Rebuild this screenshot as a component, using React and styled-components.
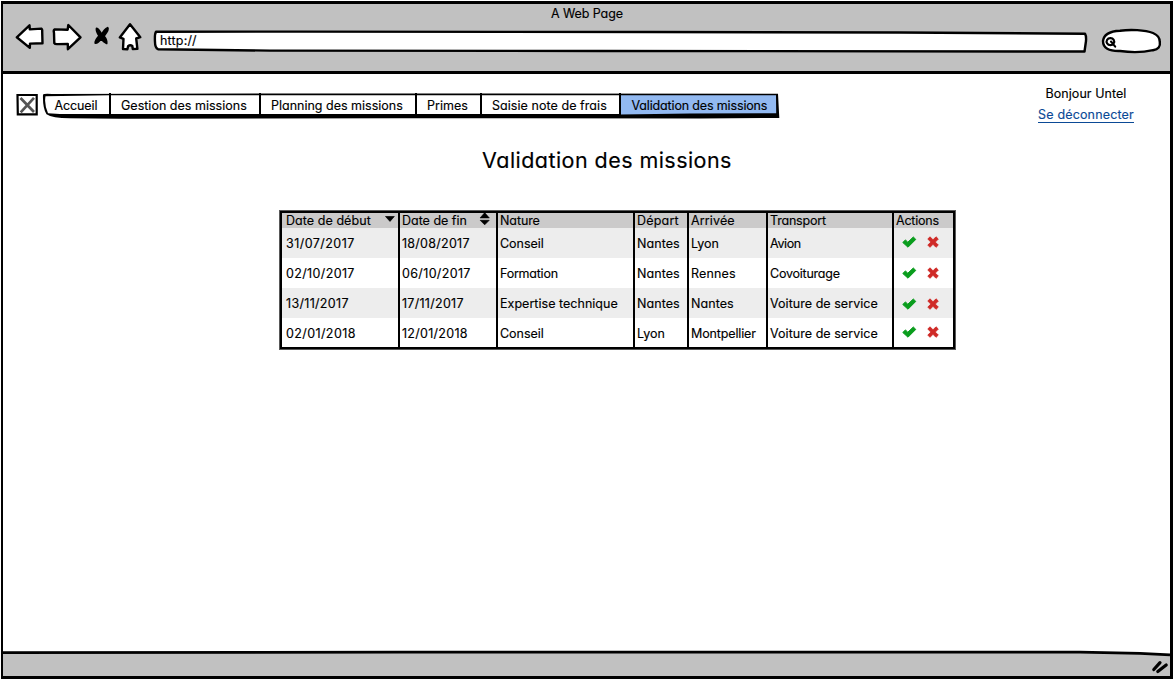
import React, { useLayoutEffect, useRef, useState } from "react";
import styled, { createGlobalStyle } from "styled-components";

const Global = createGlobalStyle`
  * { box-sizing: border-box; }
  body { margin: 0; background: #fff; }
  body, button { font-family: Inter, "Liberation Sans", sans-serif; font-size: 13px; color: #000; }
`;

const Window = styled.div`
  position: relative;
  display: flex;
  flex-direction: column;
  width: 1172px;
  height: 678px;
  margin: 1px;
  border: 3px solid #000;
  border-left-width: 2px;
  background: #fff;
`;

const Label = styled.span`
  display: inline-block;
  white-space: nowrap;
  line-height: 16px;
  font-size: ${(p) => p.$size || 12.5}px;
  font-feature-settings: "cv11" 1, "calt" 0;
  color: ${(p) => p.$color || "#000"};
  -webkit-text-stroke: 0.15px currentColor;
`;

/* Spreads the letters so that the text fills the given width. */
function Text({ children, width, size, color }) {
  const ref = useRef(null);
  const [spacing, setSpacing] = useState(0);
  useLayoutEffect(() => {
    const natural = ref.current.getBoundingClientRect().width;
    setSpacing((width + 0.8 - natural) / children.length);
  }, []);
  return (
    <Label ref={ref} $size={size} $color={color} style={{ letterSpacing: spacing }}>
      {children}
    </Label>
  );
}

const Chrome = styled.header`
  display: flex;
  flex-direction: column;
  height: 70px;
  background: #c1c1c1;
  border-bottom: 3px solid #000;
`;

const WindowTitle = styled.div`
  display: flex;
  justify-content: center;
  height: 18px;
  padding: 2px 0 0 1px;
`;

const Toolbar = styled.div`
  display: flex;
  align-items: flex-start;
  padding-left: 11px;
`;

const NavIcons = styled.svg`
  display: block;
  width: 132px;
  height: 34px;
  flex: none;
`;

const Field = styled.div`
  position: relative;
  width: ${(p) => p.$width}px;
  height: 28px;
  margin: ${(p) => p.$margin};
  padding: 6px 0 0 8px;
`;

const Outline = styled.svg`
  position: absolute;
  inset: 0;
  width: 100%;
  height: 100%;
  overflow: visible;
`;

const Above = styled.div`
  position: relative;
  display: flex;
`;

const Page = styled.main`
  flex: 1;
  display: flex;
  flex-direction: column;
`;

const TopRow = styled.div`
  display: flex;
  align-items: flex-start;
  height: 62px;
  padding: 11px 35px 0 13px;
`;

const Placeholder = styled.svg`
  width: 22px;
  height: 23px;
  margin: 8px 4px 0 0;
`;

const Menu = styled.nav`
  position: relative;
  display: flex;
  width: 738px;
  height: 28px;
  margin-top: 8px;
`;

const MenuItem = styled.div`
  position: relative;
  width: ${(p) => p.$width}px;
  height: 22px;
  padding: 4px 0 0 ${(p) => p.$pad || 11}px;
  border-left: ${(p) => (p.$first ? 0 : 2)}px solid #000;
`;

const Account = styled.div`
  display: flex;
  flex-direction: column;
  align-items: center;
  width: 98px;
  margin-left: auto;
  padding-top: 1px;
`;

const SignOut = styled.a`
  display: block;
  height: 17px;
  margin-top: 4px;
  border-bottom: 1px solid #0b4a96;
`;

const Heading = styled.h1`
  align-self: center;
  display: flex;
  align-items: center;
  height: 30px;
  margin: 9px 0 0 41px;
  font-weight: 400;
`;

const Grid = styled.section`
  display: grid;
  grid-template-columns: 116px 98px 137px 54px 79px 126px 1fr;
  grid-template-rows: 15px 30px 30px 30px 29px;
  width: 675px;
  height: 138px;
  margin: 36px 0 0 277px;
  border: 2px solid #000;
  box-shadow: 0 0 0 1px rgba(0, 0, 0, 0.65);
`;

const Cell = styled.div`
  position: relative;
  display: flex;
  align-items: center;
  padding-left: ${(p) => (p.$first ? 4 : 2)}px;
  padding-top: ${(p) => (p.$head ? 1 : 2)}px;
  border-left: ${(p) => (p.$first ? 0 : 2)}px solid #000;
  background: ${(p) => (p.$head ? "#cbcaca" : p.$odd ? "#ededed" : "#fff")};
`;

const Sorter = styled.svg`
  width: 12px;
  height: 14px;
  margin: -5px ${(p) => p.$right}px 0 auto;
`;

const Mark = styled.svg`
  width: 15px;
  height: 14px;
  margin: ${(p) => p.$shift} 0 0 ${(p) => p.$gap}px;
`;

const StatusBar = styled.footer`
  position: relative;
  height: 26px;
`;

const columns = [
  ["Date de début", 84], ["Date de fin", 64], ["Nature", 39], ["Départ", 41],
  ["Arrivée", 43], ["Transport", 55], ["Actions", 42],
];

const rows = [
  [["31/07/2017", 68], ["18/08/2017", 67], ["Conseil", 43], ["Nantes", 42], ["Lyon", 27], ["Avion", 30]],
  [["02/10/2017", 68], ["06/10/2017", 68], ["Formation", 57], ["Nantes", 42], ["Rennes", 44], ["Covoiturage", 69]],
  [["13/11/2017", 62], ["17/11/2017", 61], ["Expertise technique", 117], ["Nantes", 42], ["Nantes", 42], ["Voiture de service", 107]],
  [["02/01/2018", 69], ["12/01/2018", 65], ["Conseil", 43], ["Lyon", 27], ["Montpellier", 64], ["Voiture de service", 107]],
];

const shifts = ["-4px", "-2px", "0px", "-4px"];

function SortIcon({ both }) {
  return (
    <Sorter viewBox="0 0 12 14" $right={both ? 5 : 2}>
      {both && <path d="M1 6 5.7 .6 10.4 6Z" stroke="#000" strokeLinejoin="round" strokeWidth=".5" />}
      <path d={both ? "M1.2 8.3 10.2 8.3 5.7 12.8Z" : "M1.5 4.5H10.3L6 9.4Z"} stroke="#000" strokeLinejoin="round" strokeWidth=".7" />
    </Sorter>
  );
}

function Actions({ shift }) {
  return (
    <>
      <Mark viewBox="0 0 15 14" $gap={6} $shift={shift}>
        <path d="M.8 7.5 3.4 4.9 5.8 7.2 11.3 2 13.8 4.4 6 12.2Z" fill="#0a9d1d" stroke="#0a9d1d" strokeWidth="1" strokeLinejoin="round" />
      </Mark>
      <Mark viewBox="0 0 15 14" $gap={9} $shift={shift}>
        <path d="M4 1.8 7 4.8 10 1.8 12.3 4 9.3 7.1 12.3 10.1 10 12.3 7 9.3 4 12.3 1.8 10.1 4.8 7.1 1.8 4Z" fill="#cf2a27" stroke="#cf2a27" strokeWidth=".9" strokeLinejoin="round" />
      </Mark>
    </>
  );
}

export default function App() {
  return (
    <>
      <Global />
      <Window>
        <Chrome>
          <WindowTitle><Text width={71}>A Web Page</Text></WindowTitle>
          <Toolbar>
            <NavIcons viewBox="14 22 132 34" fill="#fff" stroke="#000" strokeWidth="2.4" strokeLinejoin="round" strokeLinecap="round">
              <path d="M16.8 37.3 29.5 25.3 29.8 29.4 41.3 28.6Q42.5 29.2 42.2 32L42.5 43.3 30 43.6 29.8 47.9Z" />
              <path d="M80.5 37.3 68.3 25 67.7 29.7 54.8 29.4Q53.2 30.2 54 33L54.3 43.2Q55 44.4 58 44.1L67.8 43.9 67.9 49.2Z" />
              <path d="M130 24.2 140.3 37.2 136.2 38.5 137.4 48.8 132.8 49.1 132.3 46Q130.2 44.4 128.1 46.2L127.4 49.2 123 49 123.5 38.8 119.8 37.4Z" />
              <path d="M96.6 28.4Q99 29.5 101.8 34.6 104.4 29 107.6 27.8 109.3 29.4 103.9 36.2 107 40 106.6 43.4 103.6 42.2 101.2 38.4 98 43.2 95.3 43 95.2 40 99.2 35.9 96 31 96.6 28.4Z" fill="#000" strokeWidth="1.9" />
            </NavIcons>
            <Field $width={934} $margin="5px 0 0 6px">
              <Outline viewBox="152 27 934 28">
                <path d="M156 31.8 300 31.6 650 32 900 32.5 1085 33.7Q1086.4 36 1086 41L1084.5 51.5 600 51 270 50.6 158 49.2Q155 48 155 42Q154.5 34 156 31.8Z" fill="#fff" stroke="#000" strokeWidth="2.4" strokeLinejoin="round" />
              </Outline>
              <Above><Text width={36}>http://</Text></Above>
            </Field>
            <Field $width={62} $margin="5px 0 0 14px">
              <Outline viewBox="1100 27 62 28">
                <path d="M1103 41Q1104 31.5 1120 30.7C1130 29.3 1145 29.8 1153 33Q1160 36 1159.8 42Q1161 48.8 1153 50.2Q1138 53.5 1120 51Q1103 51.5 1103 41Z" fill="#fff" stroke="#000" strokeWidth="2.4" />
                <path d="M1110.3 38.1a3.8 3.5 0 1 0 .2 0M1111 41.5 1115.2 46.7" fill="none" stroke="#000" strokeWidth="2.1" strokeLinecap="round" />
              </Outline>
            </Field>
          </Toolbar>
        </Chrome>

        <Page>
          <TopRow>
            <Placeholder viewBox="0 0 22 23" fill="none">
              <path d="M1.5 2H20.7V21.4H1.8Z" stroke="#000" strokeWidth="2.2" />
              <path d="M4.5 5 18 19M18 4.8 4.7 19.4" stroke="#555" strokeWidth="2.7" />
            </Placeholder>
            <Menu>
              <Outline viewBox="42 93 738 28">
                <path d="M43 94.5Q44 93.4 52 94L300 93.5 778 93.7 779.3 118 700 118.4 400 118.3 120 118.7 70 118.3Q52 118 46.5 114.2Q42.5 108 43 94.5Z" fill="#000" />
                <path d="M45.5 96.2 110 95.2H620V114H60L48 113.3Q44 104 45.5 96.2Z" fill="#fff" />
                <path d="M620 95.2H776L776.2 113.2 690 113.6 620 114.6Z" fill="#92b9f1" />
              </Outline>
              <MenuItem $first $width={67} $pad={12.5}><Text width={42}>Accueil</Text></MenuItem>
              <MenuItem $width={150} $pad={10}><Text width={125}>Gestion des missions</Text></MenuItem>
              <MenuItem $width={156} $pad={10}><Text width={131}>Planning des missions</Text></MenuItem>
              <MenuItem $width={65} $pad={10}><Text width={40}>Primes</Text></MenuItem>
              <MenuItem $width={139} $pad={10}><Text width={114}>Saisie note de frais</Text></MenuItem>
              <MenuItem $width={158} $pad={10.5}><Text width={135}>Validation des missions</Text></MenuItem>
            </Menu>
            <Account>
              <Text width={80}>Bonjour Untel</Text>
              <SignOut><Text width={95} color="#0b4a96">Se déconnecter</Text></SignOut>
            </Account>
          </TopRow>

          <Heading><Text width={249} size={21.5}>Validation des missions</Text></Heading>

          <Grid>
            {columns.map(([name, width], i) => (
              <Cell key={name} $head $first={i === 0}>
                <Text width={width}>{name}</Text>
                {i < 2 && <SortIcon both={i === 1} />}
              </Cell>
            ))}
            {rows.map((row, r) => (
              <React.Fragment key={r}>
                {row.map(([value, width], i) => (
                  <Cell key={i} $first={i === 0} $odd={r % 2 === 0}>
                    <Text width={width}>{value}</Text>
                  </Cell>
                ))}
                <Cell $odd={r % 2 === 0}><Actions shift={shifts[r]} /></Cell>
              </React.Fragment>
            ))}
          </Grid>
        </Page>

        <StatusBar>
          <Outline viewBox="3 650 1167 26">
            <path d="M3 652.3H1080L1140 653.6 1170 655V676H3Z" fill="#c1c1c1" />
            <path d="M3 652.6 400 652.2 1080 652.2 1140 653.4 1170 654.8" fill="none" stroke="#000" strokeWidth="2.8" />
            <path d="M1153.8 669.5 1160 662.7M1157.8 671.6 1166.2 665" fill="none" stroke="#000" strokeWidth="3.2" strokeLinecap="round" />
          </Outline>
        </StatusBar>
      </Window>
    </>
  );
}
